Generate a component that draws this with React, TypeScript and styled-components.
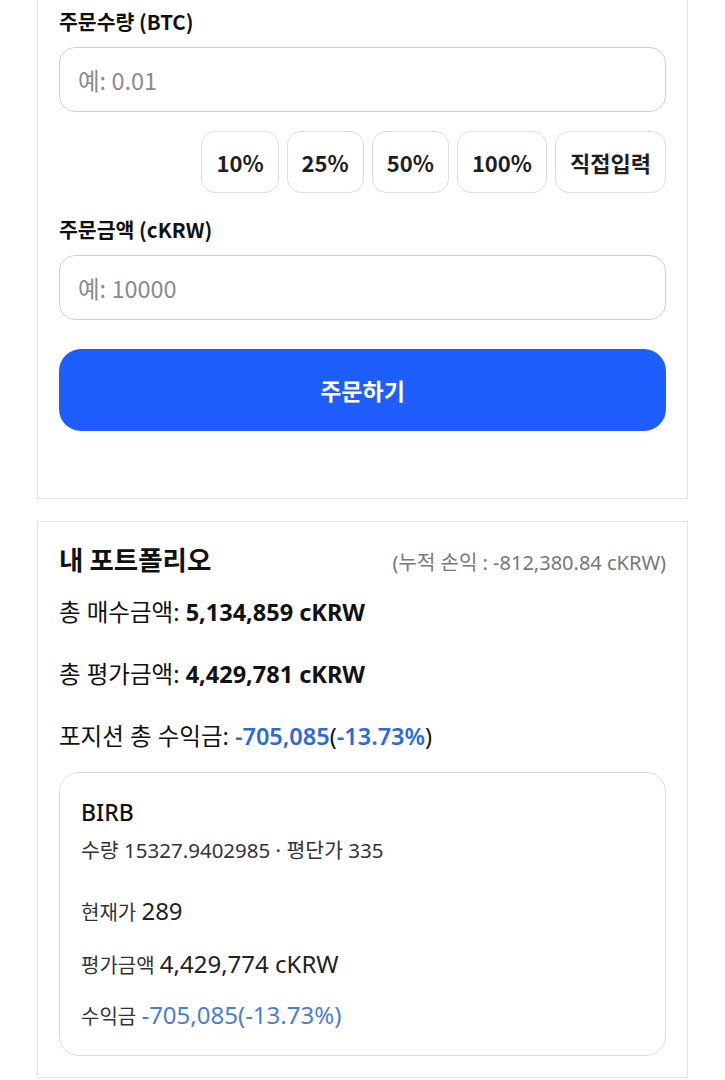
import React from 'react';
import styled, { createGlobalStyle } from 'styled-components';

// STYLES
const GlobalStyle = createGlobalStyle`
  html, body {
    margin: 0;
    padding: 0;
    background: #ffffff;
  }

  body {
    font-family: 'Noto Sans', 'Noto Sans CJK KR', sans-serif;
    color: #111111;
    overflow: hidden;
  }

  * {
    box-sizing: border-box;
  }
`;

const Page = styled.div`
  padding: 0 37px;
`;

const Panel = styled.section<{ $clipped?: boolean }>`
  border: 1px solid #e3e3e3;
  background: #ffffff;
  margin-top: ${(p) => (p.$clipped ? '-40px' : '22px')};
  padding: ${(p) => (p.$clipped ? '46px 21px 67px' : '20px 21px 21px')};
`;

const FieldLabel = styled.label<{ $gap?: number }>`
  display: block;
  margin-top: ${(p) => p.$gap ?? 0}px;
  font-family: 'Noto Sans CJK KR', sans-serif;
  font-size: 20.5px;
  font-weight: 700;
  line-height: 28px;
  color: #111111;
`;

const TextInput = styled.input`
  display: block;
  width: 100%;
  height: 65px;
  margin-top: 12px;
  padding: 0 18px;
  border: 1px solid #cfcfcf;
  border-radius: 16px;
  background: #ffffff;
  font-family: 'Noto Sans CJK KR', sans-serif;
  font-size: 23.5px;
  color: #111111;
  outline: none;

  &::placeholder {
    color: #8a8a8a;
  }
`;

const PercentRow = styled.div`
  display: flex;
  justify-content: flex-end;
  gap: 8px;
  margin-top: 19px;
`;

const PercentButton = styled.button`
  height: 62px;
  padding: 0 14px;
  border: 1px solid #dedede;
  border-radius: 14px;
  background: #ffffff;
  font-family: 'Noto Sans CJK KR', sans-serif;
  font-size: 22px;
  font-weight: 700;
  color: #1e1e1e;
`;

const SubmitButton = styled.button`
  display: block;
  width: 100%;
  height: 82px;
  margin-top: 29px;
  border: none;
  border-radius: 22px;
  background: #1f5efe;
  font-family: 'Noto Sans CJK KR', sans-serif;
  font-size: 23px;
  font-weight: 700;
  color: #ffffff;
`;

const TitleRow = styled.div`
  display: flex;
  justify-content: space-between;
  align-items: baseline;
`;

const Title = styled.h2`
  margin: 0;
  font-family: 'Noto Sans CJK KR', sans-serif;
  font-size: 26.5px;
  font-weight: 700;
  line-height: 34px;
`;

const Cumulative = styled.span`
  font-size: 20px;
  color: #777777;
`;

const SummaryLine = styled.div<{ $gap: number }>`
  margin-top: ${(p) => p.$gap}px;
  font-size: 23.5px;
  line-height: 32px;
  color: #111111;
`;

const Strong = styled.strong<{ $tone?: 'blue' }>`
  font-weight: ${(p) => (p.$tone ? 600 : 700)};
  color: ${(p) => (p.$tone ? '#2b6bd9' : '#111111')};
`;

const HoldingCard = styled.div`
  margin-top: 20px;
  padding: 24px 21px 23px;
  border: 1px solid #dcdcdc;
  border-radius: 20px;
`;

const Ticker = styled.div`
  font-size: 23px;
  font-weight: 500;
  line-height: 30px;
  color: #111111;
`;

const DetailLine = styled.div<{ $gap: number; $compact?: boolean }>`
  margin-top: ${(p) => p.$gap}px;
  font-size: ${(p) => (p.$compact ? 20.5 : 20)}px;
  line-height: ${(p) => (p.$compact ? 26 : 30)}px;
  color: #333333;
`;

const DetailValue = styled.span<{ $tone?: 'blue' }>`
  font-size: 24px;
  color: ${(p) => (p.$tone ? '#4a7dd4' : '#222222')};
`;

// DATA
const PERCENTS = ['10%', '25%', '50%', '100%', '직접입력'];

// COMPONENT
const App: React.FC = () => {
  return (
    <>
      <GlobalStyle />
      <Page>
        <Panel $clipped>
          <FieldLabel>주문수량 (BTC)</FieldLabel>
          <TextInput placeholder="예: 0.01" />

          <PercentRow>
            {PERCENTS.map((label) => (
              <PercentButton key={label}>{label}</PercentButton>
            ))}
          </PercentRow>

          <FieldLabel $gap={22}>주문금액 (cKRW)</FieldLabel>
          <TextInput placeholder="예: 10000" />

          <SubmitButton>주문하기</SubmitButton>
        </Panel>

        <Panel>
          <TitleRow>
            <Title>내 포트폴리오</Title>
            <Cumulative>(누적 손익 : -812,380.84 cKRW)</Cumulative>
          </TitleRow>

          <SummaryLine $gap={20}>
            총 매수금액: <Strong>5,134,859 cKRW</Strong>
          </SummaryLine>
          <SummaryLine $gap={30}>
            총 평가금액: <Strong>4,429,781 cKRW</Strong>
          </SummaryLine>
          <SummaryLine $gap={30}>
            포지션 총 수익금: <Strong $tone="blue">-705,085</Strong>(<Strong $tone="blue">-13.73%</Strong>)
          </SummaryLine>

          <HoldingCard>
            <Ticker>BIRB</Ticker>
            <DetailLine $gap={10} $compact>
              수량 15327.9402985 · 평단가 335
            </DetailLine>
            <DetailLine $gap={33}>
              현재가 <DetailValue>289</DetailValue>
            </DetailLine>
            <DetailLine $gap={21}>
              평가금액 <DetailValue>4,429,774 cKRW</DetailValue>
            </DetailLine>
            <DetailLine $gap={19}>
              수익금 <DetailValue $tone="blue">-705,085(-13.73%)</DetailValue>
            </DetailLine>
          </HoldingCard>
        </Panel>
      </Page>
    </>
  );
};

export default App;
